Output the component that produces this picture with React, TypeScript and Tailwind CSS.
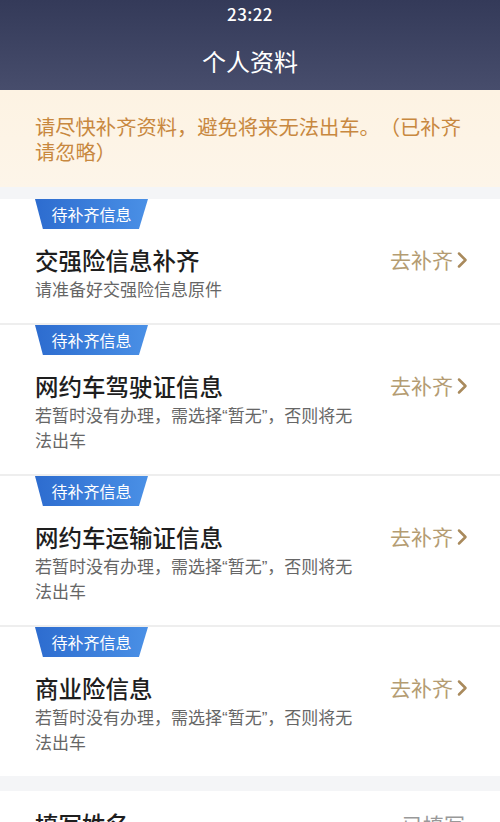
// 个人资料页:待补齐信息列表

const FONT = { fontFamily: '"Noto Sans CJK SC", "Noto Sans", sans-serif' };
// 引号用西文字体渲染成半角宽度
const DESC_FONT = { fontFamily: '"Liberation Sans", "Noto Sans CJK SC", sans-serif' };

type Item = { title: string; desc: string };

const items: Item[] = [
  { title: "交强险信息补齐", desc: "请准备好交强险信息原件" },
  { title: "网约车驾驶证信息", desc: "若暂时没有办理，需选择“暂无”，否则将无法出车" },
  { title: "网约车运输证信息", desc: "若暂时没有办理，需选择“暂无”，否则将无法出车" },
  { title: "商业险信息", desc: "若暂时没有办理，需选择“暂无”，否则将无法出车" },
];

function Chevron() {
  return (
    <svg width="12" height="18" viewBox="0 0 12 18" className="ml-[3px]">
      <path d="M3 2.5 L9.5 9 L3 15.5" fill="none" stroke="#a98a5c" strokeWidth="2.5" strokeLinecap="round" strokeLinejoin="round" />
    </svg>
  );
}

function Badge() {
  return (
    <div className="w-[113px] h-[30px] flex items-center justify-center bg-gradient-to-r from-[#2d6ccf] to-[#4a90e6] text-white text-[16px] leading-none [clip-path:polygon(0_0,100%_0,92%_100%,7%_100%)]">
      待补齐信息
    </div>
  );
}

function Card({ item }: { item: Item }) {
  return (
    <div className="bg-white px-[35px] pb-[20px]">
      <Badge />
      <div className="flex justify-between items-start mt-[16px]">
        <div>
          <div className="text-[23.5px] leading-[30px] font-medium text-[#1e1e1e]">{item.title}</div>
          <div
            className="mt-[3px] max-w-[326px] text-[17px] leading-[25px] text-[#666666] [text-spacing-trim:space-all]"
            style={DESC_FONT}
          >
            {item.desc}
          </div>
        </div>
        <div className="flex items-center h-[30px] text-[21px] text-[#b49c72] mr-[-3px]">
          去补齐
          <Chevron />
        </div>
      </div>
    </div>
  );
}

export default function App() {
  return (
    <div className="w-[500px] h-[822px] overflow-hidden bg-[#f4f5f7]" style={FONT}>
      {/* 顶部导航 */}
      <div className="h-[90px] bg-gradient-to-b from-[#343a59] to-[#474d6c] flex flex-col items-center text-white">
        <div className="mt-[4px] text-[17px] leading-[20px] font-medium tracking-wide">23:22</div>
        <div className="mt-[22px] text-[24px] leading-[30px]">个人资料</div>
      </div>

      {/* 提示条 */}
      <div className="bg-gradient-to-b from-[#fdf3e3] to-[#fdf5e9] px-[35px] pt-[24px] pb-[23px] text-[20.3px] leading-[25px] text-[#c8883f] [text-spacing-trim:space-all]">
        请尽快补齐资料，避免将来无法出车。（已补齐请忽略）
      </div>

      <div className="h-[12px]" />

      <div className="flex flex-col gap-[2px] bg-[#eeeeee]">
        {items.map((it) => (
          <Card key={it.title} item={it} />
        ))}
      </div>

      <div className="h-[15px]" />

      <div className="bg-white px-[35px] pt-[18px] flex justify-between">
        <div className="text-[23.5px] leading-[30px] font-medium text-[#1e1e1e]">填写姓名</div>
        <div className="text-[21px] leading-[30px] text-[#999999]">已填写</div>
      </div>
    </div>
  );
}
